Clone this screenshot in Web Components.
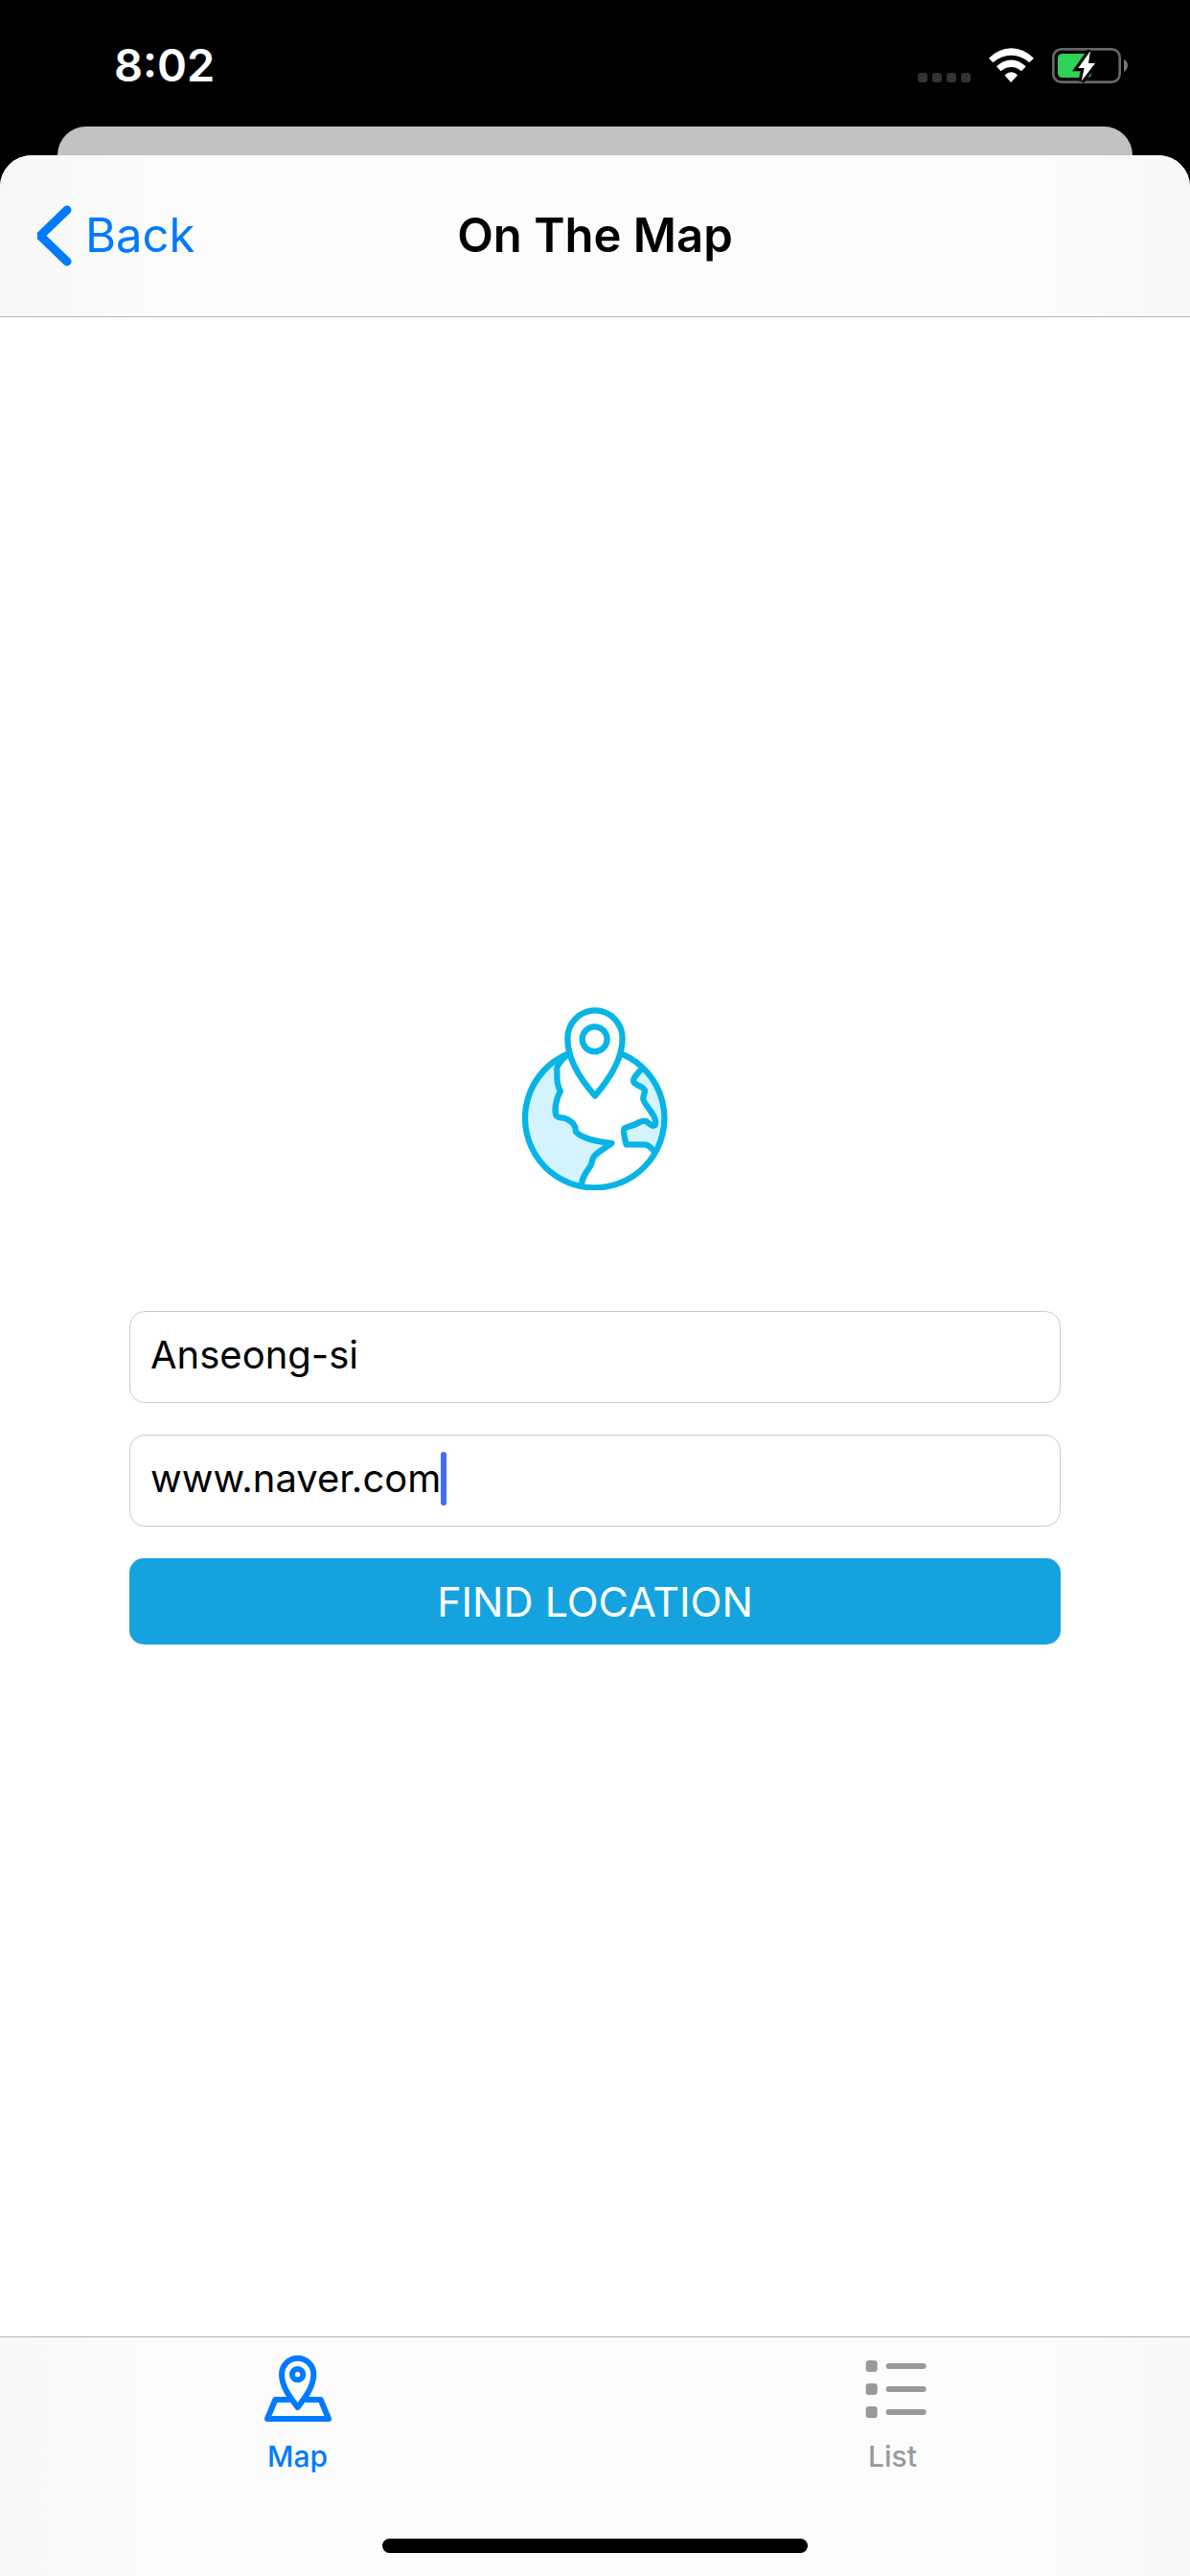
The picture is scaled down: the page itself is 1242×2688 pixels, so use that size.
<!DOCTYPE html>
<html lang="en">
<head>
<meta charset="utf-8">
<meta name="viewport" content="width=device-width, initial-scale=1">
<title>On The Map</title>
<style>
  html, body { margin: 0; background: #000; }
  body { font-family: Inter, "Liberation Sans", sans-serif; color: #000; }
</style>
</head>
<body>
<map-app></map-app>

<script>
const define = (name, html, setup) => {
  const template = document.createElement('template');
  template.innerHTML = html;
  customElements.define(name, class extends HTMLElement {
    constructor() {
      super();
      const root = this.attachShadow({ mode: 'open' });
      root.append(template.content.cloneNode(true));
    }
    connectedCallback() { if (setup) setup(this, this.shadowRoot); }
  });
};

define('status-bar', `
  <style>
    :host { display: flex; align-items: center; justify-content: space-between; height: 136px; margin-bottom: -4px; padding: 0 65px 0 119px; color: #fff; }
    time { font-size: 47px; font-weight: 600; line-height: 60px; }
    .signals { display: flex; align-items: center; gap: 19px; }
    svg { display: block; }
  </style>
  <time datetime="20:02">8:02</time>
  <div class="signals">
    <svg width="55" height="37" viewBox="174 147 165 111" role="img" aria-label="No signal" fill="#333">
      <rect x="174" y="225" width="30" height="30" rx="9"/>
      <rect x="219" y="225" width="30" height="30" rx="9"/>
      <rect x="264" y="225" width="30" height="30" rx="9"/>
      <rect x="309" y="225" width="30" height="30" rx="9"/>
    </svg>
    <svg width="47" height="37" viewBox="396 147 142 111" role="img" aria-label="Wi-Fi" fill="#fff">
      <path d="M396 179Q427 147 467 147Q507 147 538 179L524 193Q499 170 467 170Q435 170 409 193Z"/>
      <path d="M420 205Q441 184 467 184Q492 184 513 205L499 220Q484 207 467 207Q449 207 434 220Z"/>
      <path d="M446 233Q456 223 467 223Q478 223 487 233L466 255Z"/>
    </svg>
    <svg width="79" height="37" viewBox="594 147 237 111" role="img" aria-label="Battery charging">
      <rect x="598" y="151" width="208" height="103" rx="25" fill="none" stroke="#666" stroke-width="8"/>
      <path d="M819 183Q831 189 831 202Q831 216 819 222Z" fill="#777"/>
      <rect x="612" y="165" width="106" height="75" rx="14" fill="#30d158"/>
      <path d="M714 157L676 210H695L686 251L729 195H708Z" fill="#fff" stroke="#000" stroke-width="19" paint-order="stroke"/>
    </svg>
  </div>`);

define('nav-header', `
  <style>
    :host { display: grid; grid-template-columns: 1fr auto 1fr; align-items: center; height: 168px; padding: 0 38px;
      background: linear-gradient(90deg, #f7f7f7, #fcfcfc 15%, #fcfcfc 85%, #f8f8f8); border-bottom: 1px solid #b2b2b2; }
    button { display: flex; align-items: center; justify-self: start; gap: 13px; padding: 0; border: 0; background: none; color: #007aff; font: inherit; font-size: 49px; line-height: 64px; }
    svg { display: block; }
    h1 { margin: 0; font-size: 49px; font-weight: 600; line-height: 64px; }
  </style>
  <button type="button">
    <svg width="38" height="64" viewBox="0 0 38 64" fill="none" stroke="#007aff" stroke-width="9" stroke-linecap="round" aria-hidden="true"><path d="M32 5L4 32L32 59" stroke-linejoin="bevel"/></svg>
    <slot name="back"></slot>
  </button>
  <h1><slot></slot></h1>`);

define('globe-pin', `
  <style>:host { display: block; } svg { display: block; }</style>
  <svg width="152" height="191" viewBox="45 48 456 573" fill="none" stroke="#06b4e6" stroke-width="19" stroke-linecap="round" stroke-linejoin="round" role="img" aria-label="Globe with location pin">
    <path fill="#d3f4ff" stroke="none" d="M188 194Q152 228 154 245V281Q158 302 165 309Q150 340 149 380Q152 394 175 394Q211 414 213 437Q230 463 325 474Q281 502 265 524Q260 548 231 602A218 218 0 0 1 188 194Z"/>
    <path fill="#d3f4ff" stroke="none" d="M421 240Q388 272 394 283Q431 301 424 316Q420 338 429 352L456 392Q465 407 463 422Q435 403 424 404Q362 425 363 433L370 478H429Q442 480 459 500A218 218 0 0 0 421 240Z"/>
    <path d="M188 194A218 218 0 1 0 361 196"/>
    <path d="M188 196C170 210 150 233 154 247C155 268 151 292 165 310C149 338 146 370 151 386C157 398 172 391 185 398C208 410 212 420 213 438C235 463 295 470 325 474C300 493 278 502 268 518C262 529 265 536 258 546C244 566 234 579 231 602"/>
    <path d="M421 240C397 263 390 275 395 284C404 293 427 298 429 309C430 317 423 324 424 336C426 346 438 360 449 376C463 396 465 407 462 415C457 425 444 414 435 406C428 402 421 404 412 408C394 420 370 422 365 427C361 436 367 464 371 478H427C442 478 447 487 458 499"/>
    <path fill="#fff" d="M273 325C233 280 187 213 187 146A86 88 0 0 1 359 146C359 213 312 280 273 325Z"/>
    <circle cx="272" cy="148" r="39"/>
  </svg>`);

define('text-field', `
  <style>
    :host { display: block; }
    label { display: flex; align-items: center; height: 90px; padding: 0 21px 4px; border: 1px solid #ccc; border-radius: 16px; background: #fff; cursor: text; }
    input { field-sizing: content; min-width: 0; max-width: 100%; height: 56px; margin: 0; padding: 0; border: 0; outline: 0; background: none; color: #000; font: inherit; font-size: 40px; line-height: 56px; }
    .caret { display: none; flex: none; width: 6px; height: 56px; border-radius: 3px; background: #436ef0; }
    :host([editing]) .caret { display: block; }
    :host([editing]) input { caret-color: transparent; }
  </style>
  <label><input type="text"><span class="caret"></span></label>`,
  (host, root) => {
    const input = root.querySelector('input');
    input.value = host.getAttribute('value') || '';
    input.setAttribute('aria-label', host.getAttribute('label') || '');
  });

define('primary-button', `
  <style>
    :host { display: block; }
    button { display: block; width: 100%; height: 90px; padding: 0; border: 0; border-radius: 15px; background: #15a3df; color: #fff; font: inherit; font-size: 43px; line-height: 60px; }
  </style>
  <button type="button"><slot></slot></button>`);

define('location-form', `
  <style>
    :host { display: flex; flex: 1; flex-direction: column; justify-content: center; gap: 126px; padding: 0 135px 2px; background: #fff; }
    globe-pin { align-self: center; }
    form { display: flex; flex-direction: column; gap: 33px; }
  </style>
  <globe-pin></globe-pin>
  <form>
    <text-field label="Location" value="Anseong-si"></text-field>
    <text-field label="Website" value="www.naver.com" editing></text-field>
    <primary-button>FIND LOCATION</primary-button>
  </form>`);

define('tab-item', `
  <style>
    :host { display: flex; flex: 1; justify-content: center; color: #999; }
    :host([selected]) { color: #007aff; }
    a { display: flex; flex-direction: column; align-items: center; gap: 18px; color: inherit; text-decoration: none; font-size: 30px; font-weight: 500; line-height: 36px; }
    ::slotted(svg) { display: block; }
  </style>
  <a href="#"><slot name="icon"></slot><slot></slot></a>`);

define('tab-bar', `
  <style>
    :host { display: flex; flex-direction: column; justify-content: space-between; box-sizing: border-box; height: 250px; padding: 18px 0 24px; border-top: 1px solid #b2b2b2;
      background: linear-gradient(90deg, #f8f8f8, #fcfcfc 15%, #fcfcfc 85%, #f8f8f8); }
    nav { display: flex; }
    .home { align-self: center; width: 444px; height: 15px; border-radius: 8px; background: #000; }
  </style>
  <nav>
    <tab-item selected>
      <svg slot="icon" width="72" height="70" viewBox="105 111 216 210" fill="none" stroke="currentColor" stroke-width="18" stroke-linejoin="round" aria-hidden="true">
        <path d="M188 252H142L117 312H309L284 252H237"/>
        <path d="M212 276C192 250 162 213 162 173A50 51 0 0 1 262 173C262 213 232 250 212 276Z"/>
        <circle cx="212" cy="173" r="17"/>
      </svg>Map</tab-item>
    <tab-item>
      <svg slot="icon" width="72" height="70" viewBox="76 111 216 210" fill="currentColor" aria-hidden="true">
        <rect x="99" y="129" width="36" height="36" rx="10"/><rect x="162" y="138" width="126" height="18" rx="9"/>
        <rect x="99" y="201" width="36" height="36" rx="10"/><rect x="162" y="210" width="126" height="18" rx="9"/>
        <rect x="99" y="273" width="36" height="36" rx="10"/><rect x="162" y="282" width="126" height="18" rx="9"/>
      </svg>List</tab-item>
  </nav>
  <div class="home"></div>`);

define('map-app', `
  <style>
    :host { display: flex; flex-direction: column; min-height: 100vh; background: #000; }
    .behind { height: 30px; margin: 0 60px; border-radius: 30px 30px 0 0; background: #c1c2c4; }
    .sheet { display: flex; flex: 1; flex-direction: column; overflow: hidden; border-radius: 33px 33px 0 0; background: #fff; }
  </style>
  <status-bar></status-bar>
  <div class="behind"></div>
  <div class="sheet">
    <nav-header><span slot="back">Back</span>On The Map</nav-header>
    <location-form></location-form>
    <tab-bar></tab-bar>
  </div>`);
</script>
</body>
</html>
